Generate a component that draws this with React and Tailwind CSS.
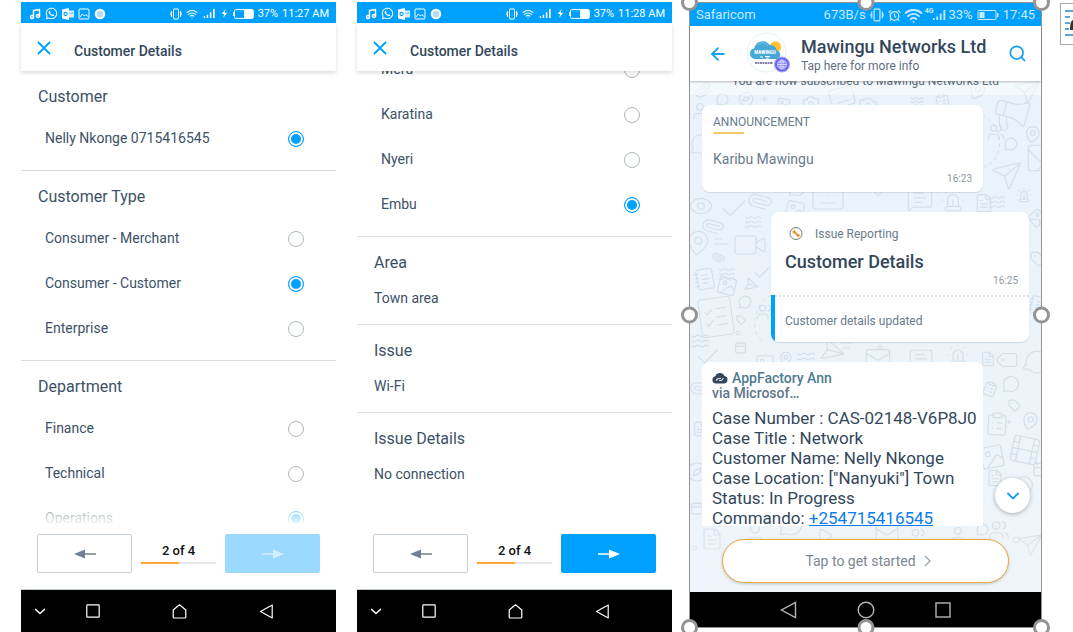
import React from "react";
import {
  Megaphone, MapPin, Camera, Send, Paperclip, Eye, Check, Image, Video, NotebookText, ClipboardList,
  MessageCircle, Calendar, Siren, FileText, Compass, Users, Play, Tag, Mail, Film, Search, ArrowLeft,
  ChevronDown, ChevronRight, AlarmClock, Wifi, Music, Keyboard, User, ListChecks, Waves, MessageSquareText,
} from "lucide-react";
import { FaWhatsapp } from "react-icons/fa";

const Vibrate = ({ className }) => (
  <svg className={className} viewBox="0 0 12 12" fill="none" stroke="currentColor">
    <rect x="3.5" y="1" width="5" height="10" rx="0.5" />
    <path d="M1.5 3v6M10.5 3v6" />
    <path d="M0.3 4.5v3M11.7 4.5v3" strokeWidth="0.6" />
  </svg>
);

const Bars = ({ className }) => (
  <svg className={className} viewBox="0 0 13 10" fill="currentColor">
    <path d="M0 8h1.6v2H0zM3.4 6.5H5V10H3.4zM6.8 3.5h1.8V10H6.8zM10.4 0h1.9v10h-1.9z" />
  </svg>
);

const Battery = ({ className, low }) => (
  <svg className={className} viewBox="0 0 21 10" fill="none" stroke="currentColor">
    {low ? (
      <>
        <rect x="0.5" y="0.5" width="18" height="9" rx="1" />
        <path d="M2 2h5v6H2z" fill="currentColor" stroke="none" />
        <path d="M20.2 3v4" strokeWidth="1.4" />
      </>
    ) : (
      <>
        <rect x="1.5" y="0.6" width="18.8" height="8.8" rx="1" />
        <path d="M11 1h9v8h-9z" fill="currentColor" stroke="none" />
        <path d="M0.7 3v4" strokeWidth="1.4" />
      </>
    )}
  </svg>
);

function StatusBar({ time }) {
  return (
    <div className="flex h-[21px] shrink-0 items-center justify-between bg-[#00a0ff] pt-[2px] pr-[7px] pl-2 text-[11px] leading-4 text-white">
      <div className="flex items-center gap-1">
        <Music className="size-[12px]" strokeWidth={3} />
        <FaWhatsapp className="size-[13px]" />
        <svg className="size-[12px]" viewBox="0 0 12 12">
          <path d="M0 1.5 7 0v12L0 10.5z" fill="#fff" />
          <path d="M7 2.5h5v7H7z" fill="#fff" fillOpacity=".85" />
          <circle cx="3.5" cy="6" r="1.6" fill="none" stroke="#00a0ff" strokeWidth="1.1" />
          <path d="M8 4.5l1.5 1.5L11.5 4" fill="none" stroke="#00a0ff" strokeWidth=".8" />
        </svg>
        <svg className="size-[12px]" viewBox="0 0 12 12" fill="none" stroke="#fff">
          <rect x="1" y="1" width="10" height="10" rx="1" />
          <path d="M2 9l2.5-3 2 2 1.5-1.5L10.500 9" />
        </svg>
        <svg className="size-[12px]" viewBox="0 0 12 12">
          <circle cx="6" cy="6" r="5.3" fill="#fff" />
          <circle cx="6" cy="6" r="2.9" fill="#b9defa" stroke="#9fd6fb" strokeWidth=".6" />
        </svg>
      </div>
      <div className="flex items-center gap-1">
        <Vibrate className="size-3" />
        <Wifi className="size-3" strokeWidth={2.2} />
        <Bars className="ml-px h-[9px] w-[13px]" />
        <svg className="h-[9px] w-[9px]" viewBox="1 0 9 9" fill="#fff">
          <path d="M6.500 0 2.800 5h2.400L4.200 9 8.200 3.800H5.800z" />
        </svg>
        <Battery className="h-[10px] w-[21px]" />
        <span>37%</span>
        <span>{time}</span>
      </div>
    </div>
  );
}

function Header() {
  return (
    <header className="relative z-10 flex h-12 shrink-0 items-center gap-[22px] bg-white pl-[15px] shadow-[0_2px_4px_rgba(0,0,0,0.14)]">
      <button aria-label="Close" className="pt-px text-[#00a0ff]">
        <svg className="block size-4" viewBox="0 0 16 16" fill="none" stroke="currentColor" strokeWidth="1.8">
          <path d="M2 2l12 12M14 2 2 14" />
        </svg>
      </button>
      <h1 className="pt-[7px] text-[14px] leading-5 font-medium text-[#33475b]">Customer Details</h1>
    </header>
  );
}

function Option({ name, label, checked }) {
  return (
    <label className="flex h-[45px] items-center justify-between pr-8 pl-6 text-[14px] leading-5">
      <span>{label}</span>
      <input
        type="radio"
        name={name}
        defaultChecked={checked}
        className="mt-[2px] size-4 appearance-none rounded-full border border-[#aeb6bf] bg-white checked:border-[#00a0ff] checked:bg-[#00a0ff] checked:shadow-[inset_0_0_0_2px_#fff]"
      />
    </label>
  );
}

function Group({ title, name, options, last }) {
  return (
    <fieldset className={last ? "" : "border-b border-[#d9dcdf] pb-[10px]"}>
      {title && <div className="pt-4 pb-2 pl-[17px] text-[16px] leading-5">{title}</div>}
      {options.map(([label, checked]) => (
        <Option key={label} name={name} label={label} checked={checked} />
      ))}
    </fieldset>
  );
}

function Field({ title, value, last }) {
  return (
    <section className={last ? "py-4 pl-[17px]" : "border-b border-[#d9dcdf] py-4 pl-[17px]"}>
      <h2 className="text-[16px] leading-5">{title}</h2>
      <p className="mt-[15px] text-[14px] leading-5">{value}</p>
    </section>
  );
}

const Arrow = ({ back }) => (
  <svg className="h-[10px] w-[22px]" viewBox="0 0 22 10" fill="currentColor">
    {back ? <path d="M0 5 11 .5v3.700h11v1.600H11v3.700z" /> : <path d="M22 5 11 .5v3.700H0v1.600h11v3.700z" />}
  </svg>
);

function FormPhone({ time, busy, children }) {
  return (
    <section className="flex min-w-0 flex-[315_1_0%] flex-col bg-white text-[#3d5166]">
      <StatusBar time={time} />
      <Header />
      <div className="relative flex-1 overflow-hidden">
        {children}
        {busy && <div className="absolute inset-x-0 bottom-0 h-6 bg-linear-to-b from-white/30 to-white" />}
      </div>
      <footer className="grid h-16 shrink-0 grid-cols-[95fr_75fr_95fr] items-start gap-[9px] border-b border-[#c3d0ca] px-4 pt-2">
        <button aria-label="Previous" className="flex h-[39px] items-center justify-center rounded-[2px] border border-[#c7cfd7] text-[#6f8193]">
          <Arrow back />
        </button>
        <div className="pt-[7px] text-center text-[13px] leading-5 font-medium text-[#111]">
          2 of 4
          <div className="mt-px h-[2px] bg-[#e7e9f0]">
            <div className="h-full w-1/2 bg-[#ffa733]" />
          </div>
        </div>
        <button
          aria-label="Next"
          className={
            busy
              ? "flex h-[39px] items-center justify-center rounded-[2px] bg-[#9bd9fe] text-[#d3eefe]"
              : "flex h-[39px] items-center justify-center rounded-[2px] bg-[#00a0ff] text-white"
          }
        >
          <Arrow />
        </button>
      </footer>
      <nav className="flex h-[42px] shrink-0 items-center bg-black pr-[62px] pl-[13px] text-white">
        <button aria-label="Hide">
          <svg className="block size-3" viewBox="0 0 12 12" fill="none" stroke="currentColor" strokeWidth="1.5"><path d="M1 4l5 4.500L11 4" /></svg>
        </button>
        <div className="ml-10 flex flex-1 items-center justify-between">
          <button aria-label="Recent apps">
            <svg className="block size-[14px]" viewBox="0 0 14 14" fill="none" stroke="currentColor" strokeWidth="1.2"><rect x=".8" y=".8" width="12.4" height="12.4" rx=".6" /></svg>
          </button>
          <button aria-label="Home">
            <svg className="block size-[15px]" viewBox="0 0 15 15" fill="none" stroke="currentColor" strokeWidth="1.2" strokeLinejoin="round"><path d="M1.200 6 7.500.8 13.800 6v7a1 1 0 0 1-1 1H2.200a1 1 0 0 1-1-1z" /></svg>
          </button>
          <button aria-label="Back">
            <svg className="block size-[15px]" viewBox="0 0 15 15" fill="none" stroke="currentColor" strokeWidth="1.2" strokeLinejoin="round"><path d="M13.200 1v13L1.500 7.500z" /></svg>
          </button>
        </div>
      </nav>
    </section>
  );
}

/* [icon, x, y, size, rotation] */
const doodles = [
  [MessageCircle, 26, 12, 13, 0], [Compass, 48, 10, 16, 20], [Image, 86, 16, 15, 10], [Camera, 112, 13, 18, -5],
  [Keyboard, 138, 2, 28, -15], [Camera, 168, 14, 20, 8], [Waves, 220, 14, 14, 0], [ClipboardList, 244, 12, 17, -12],
  [User, 0, 20, 20, 0], [Paperclip, 4, 0, 18, 10], [MapPin, 277, 0, 20, 30], [Send, 322, -4, 28, 10],
  [Megaphone, 300, 12, 42, 15], [MapPin, 333, 44, 19, 10], [Users, 297, 42, 18, 0], [MessageCircle, 314, 56, 14, 0],
  [Send, 300, 78, 32, 5], [Image, 334, 60, 34, 90], [Waves, 298, 112, 18, 0], [Siren, 326, 106, 16, 0],
  [MessageCircle, 0, 52, 22, 0], [Eye, -2, 112, 26, 0], [Check, 28, 112, 32, 0], [Paperclip, 58, 108, 24, 60],
  [Image, 94, 118, 22, 12], [MessageCircle, 98, 98, 18, 0], [Keyboard, 120, 98, 36, 0], [MapPin, 178, 96, 20, 0],
  [MessageSquareText, 216, 104, 28, 0], [Siren, 250, 106, 26, 0], [FileText, 284, 112, 20, 0],
  [Paperclip, 12, 134, 22, 60], [MapPin, -6, 148, 28, 8], [Video, 42, 146, 36, 0], [Waves, 54, 132, 18, 0],
  [Paperclip, 22, 170, 13, 70], [NotebookText, 3, 186, 24, -10], [Waves, 28, 184, 18, 0], [Check, 62, 182, 20, 0],
  [Image, 26, 194, 22, 14], [Send, 52, 196, 15, 60], [MessageCircle, 48, 214, 14, 0], [ListChecks, 12, 222, 28, -8],
  [Tag, 46, 234, 10, 0], [Users, 66, 222, 18, 0], [Calendar, 44, 260, 13, 0], [Check, 4, 262, 28, 0],
  [Waves, 0, 250, 20, 0], [Image, 64, 272, 22, 0], [MapPin, 88, 270, 15, 20], [Waves, 106, 268, 20, 0],
  [Send, 126, 256, 26, 60], [Mail, 174, 264, 28, 0], [MessageSquareText, 218, 266, 26, 0], [Siren, 256, 262, 24, 0],
  [FileText, 290, 270, 16, 0], [Tag, 308, 268, 22, -45], [MessageCircle, 334, 268, 26, 20],
  [Image, 338, 128, 18, 50], [Tag, 340, 170, 16, 0], [NotebookText, 338, 214, 20, 10],
  [Paperclip, 0, 296, 22, 50], [FileText, 2, 340, 16, 0], [Compass, -4, 380, 22, 0], [Calendar, 0, 420, 14, 0],
  [ClipboardList, 292, 300, 16, 20], [MessageCircle, 312, 294, 18, 0], [Tag, 318, 318, 13, 0],
  [ClipboardList, 294, 330, 26, 3], [MapPin, 330, 330, 20, 20], [Film, 318, 352, 34, 12], [Image, 288, 362, 28, -12],
  [FileText, 296, 388, 18, 0], [Calendar, 342, 380, 16, 0], [MessageCircle, 324, 394, 20, 0],
  [FileText, 10, 446, 24, 0], [User, 52, 440, 26, 0], [MessageCircle, 88, 430, 26, 0], [Play, 126, 446, 18, 0],
  [Mail, 184, 440, 26, 0], [Users, 218, 446, 20, 0], [User, 258, 444, 20, 0], [MessageCircle, 286, 442, 13, 0],
  [Users, 298, 438, 22, 0], [Send, 326, 450, 26, 10],
];

function Wallpaper() {
  return (
    <svg aria-hidden="true" className="absolute inset-x-0 top-0 h-full w-full text-[#d3e0e9]">
      {doodles.map(([Icon, x, y, size, turn], i) => (
        <g key={i} transform={`rotate(${turn} ${x + size / 2} ${y + size / 2})`}>
          <Icon x={x} y={y} size={size} strokeWidth={1.2} absoluteStrokeWidth />
        </g>
      ))}
      <g fill="none" stroke="currentColor">
        <rect x="10" y="217" width="32" height="38" rx="3" transform="rotate(-8 26 236)" />
        <circle cx="187" cy="25" r="2" /><circle cx="48" cy="252" r="2" /><circle cx="190" cy="266" r="2" />
        <circle cx="326" cy="459" r="3" /><circle cx="5" cy="467" r="2" />
        <path d="M72 18h5M74.500 15.500v5M317 341h4M319 339v4M24 158h8M24 163h14M150 262h12M152 267h8" />
        <path d="M292 34c22 10 24 44 2 52M81 214c-18 10-22 38-8 46" strokeDasharray="4 3" />
      </g>
    </svg>
  );
}

function Logo() {
  return (
    <svg className="size-[44px]" viewBox="0 0 44 44">
      <circle cx="20.5" cy="20.5" r="19.5" fill="#fff" stroke="#e4f2f8" />
      <circle cx="29.500" cy="15" r="5.500" fill="#ffc12e" stroke="#fbd469" />
      <path d="M9 27a5.500 5.500 0 0 1-.8-10.800A8.500 8.500 0 0 1 23.500 13a7 7 0 0 1 7.500 5.500 4.500 4.500 0 0 1 .5 8.500z" fill="#45a9d8" />
      <path d="M10 13.500c4-4 9-3 12 .5" fill="none" stroke="#7cc8e8" />
      <text x="19" y="22" textAnchor="middle" fontSize="4.5" fontWeight="900" fill="#fff" fontFamily="Roboto, sans-serif">MAWINGU</text>
      <path d="M14 25h3M19 24.500h5M20 26h3" stroke="#fff" strokeWidth="1.2" />
      <path d="M9 31h18" stroke="#5b5a96" strokeWidth="1.5" strokeDasharray="2 .5" />
      <circle cx="36" cy="32.500" r="7.500" fill="#6b67f2" stroke="#a3a5f7" />
      <g fill="none" stroke="#dcdcff" strokeWidth=".9">
        <circle cx="36" cy="32.500" r="4.500" />
        <ellipse cx="36" cy="32.500" rx="2" ry="4.500" />
        <path d="M31.500 32.500h9M36 28v9M32.300 30.200h7.400M32.300 34.800h7.400" />
      </g>
    </svg>
  );
}

const handle = "absolute z-20 size-[17px] rounded-full border-[3px] border-[#949494] bg-white";

function ChatPhone() {
  return (
    <section className="relative mb-1 ml-[17px] flex min-w-0 flex-[351_1_0%] flex-col border border-[#949494] text-[#33475b]">
      <div className="flex h-[23px] shrink-0 items-center bg-[#00a0ff] px-[6px] pt-px text-[13px] leading-5 text-[#c9eaff]">
        <span className="flex-1">Safaricom</span>
        <span>673B/s</span>
        <Vibrate className="ml-1 size-[14px]" />
        <AlarmClock className="ml-1 size-[13px]" strokeWidth={2.4} />
        <Wifi className="ml-[3px] size-[19px]" strokeWidth={2.4} />
        <span className="mb-2 ml-[2px] text-[7px] leading-2 font-bold">4G</span>
        <Bars className="h-[12px] w-[13px]" />
        <span className="ml-[2px]">33%</span>
        <Battery low className="ml-1 h-[10px] w-[22px]" />
        <span className="ml-1">17:45</span>
      </div>
      <header className="relative z-10 flex h-[55px] shrink-0 items-center bg-white pr-[14px] pl-[18px] shadow-[0_1px_2px_rgba(0,0,0,0.25)]">
        <button aria-label="Back" className="text-[#18a0f5]">
          <ArrowLeft className="size-[20px]" strokeWidth={2.2} />
        </button>
        <div className="ml-[18px]"><Logo /></div>
        <div className="ml-[11px] min-w-0 flex-1 pt-[2px]">
          <h1 className="text-[18px] leading-[22px] font-medium whitespace-nowrap">Mawingu Networks Ltd</h1>
          <p className="text-[12px] leading-4 text-[#5f7080]">Tap here for more info</p>
        </div>
        <button aria-label="Search" className="text-[#18a0f5]">
          <Search className="size-[19px]" strokeWidth={2.2} />
        </button>
      </header>
      <div className="relative flex flex-1 flex-col overflow-hidden bg-linear-to-b from-[#e9f3f9] to-[#eef4fa]">
        <Wallpaper />
        <div className="relative flex-1 overflow-hidden">
          <div className="h-[14px] overflow-hidden bg-white/50 text-center text-[12px] leading-4 text-[#5f7080]">
            <p className="-mt-2">You are now subscribed to Mawingu Networks Ltd</p>
          </div>
          <article className="mt-[10px] ml-3 h-[87px] w-[281px] rounded-lg bg-white px-[11px] pt-[9px] shadow-[0_1px_1px_rgba(120,140,160,0.25)]">
            <h2 className="text-[12px] leading-4 text-[#6a7a8a]">ANNOUNCEMENT</h2>
            <div className="mt-[2px] h-[2px] w-[31px] bg-[#efcb6c]" />
            <p className="mt-[15px] text-[14px] leading-5 text-[#6a7a8a]">Karibu Mawingu</p>
            <time className="block text-right text-[10px] leading-5 text-[#8c98a3]">16:23</time>
          </article>
          <article className="mt-5 mr-3 ml-auto h-[130px] w-[258px] overflow-hidden rounded-lg bg-white shadow-[0_1px_1px_rgba(120,140,160,0.25)]">
            <div className="h-[83px] pt-[14px] pr-[11px] pl-[14px]">
              <div className="flex items-center gap-3 pl-1 text-[12px] leading-4 text-[#6a7a8a]">
                <svg className="size-[14px]" viewBox="0 0 14 14" fill="none">
                  <circle cx="7" cy="6.500" r="6" fill="#fffdf5" stroke="#737b78" />
                  <path d="M5 4.500l4.500 4.500" stroke="#e8912c" strokeWidth="1.8" />
                  <path d="M3.500 4.800l1.700.2.2-1.900M8.800 10l.4-1.500 1.700-.3" stroke="#d37b27" strokeWidth="1.2" />
                </svg>
                Issue Reporting
              </div>
              <h2 className="mt-[10px] text-[18px] leading-5 font-medium">Customer Details</h2>
              <time className="block pt-[3px] text-right text-[10px] leading-3 text-[#8c98a3]">16:25</time>
            </div>
            <div className="h-[47px] border-l-4 border-[#00a0ff]">
              <div className="border-t-2 border-dotted border-[#dfe3e7] pt-[14px] pl-[10px] text-[12px] leading-5 text-[#6a7a8a]">
                Customer details updated
              </div>
            </div>
          </article>
          <article className="mt-5 ml-3 w-[281px] rounded-t-lg bg-white px-[10px] pt-2 pb-4">
            <div className="flex items-center gap-1 text-[14px] leading-4 font-medium text-[#4d7c90]">
              <svg className="h-[12px] w-[16px]" viewBox="0 0 16 12">
                <path d="M4 11.500a3.700 3.700 0 0 1-.7-7.300A5 5 0 0 1 12.500 4 3.800 3.800 0 0 1 12 11.500z" fill="#33475b" />
                <path d="M4 8.500l2-2h3M11.500 6l-2 2.500H7" fill="none" stroke="#d9e2ea" strokeWidth="1.2" />
              </svg>
              AppFactory Ann
            </div>
            <p className="text-[14px] leading-[14px] font-medium text-[#62768a]">via Microsof…</p>
            <div className="mt-2 text-[17px] leading-[20px] whitespace-nowrap">
              <p>Case Number : CAS-02148-V6P8J0</p>
              <p>Case Title : Network</p>
              <p>Customer Name: Nelly Nkonge</p>
              <p>Case Location: ["Nanyuki"] Town</p>
              <p>Status: In Progress</p>
              <p>Commando: <a href="tel:+254715416545" className="text-[#0b7bf0] underline">+254715416545</a></p>
            </div>
          </article>
          <button aria-label="Scroll to latest" className="absolute right-[11px] bottom-[13px] flex size-[35px] items-center justify-center rounded-full bg-white text-[#18a0f5] shadow-[0_1px_4px_rgba(0,0,0,0.3)]">
            <ChevronDown className="size-5" strokeWidth={2.2} />
          </button>
        </div>
        <div className="relative h-[66px] shrink-0 bg-linear-to-b from-transparent to-[#eef4fa] px-8 pt-[13px]">
          <button className="flex h-[44px] w-full items-center justify-center gap-1 rounded-full border border-[#e9a93c] bg-white pl-2 text-[14px] text-[#7c8791] shadow-[0_1px_3px_rgba(0,0,0,0.2)]">
            Tap to get started
            <svg className="h-3 w-[14px]" viewBox="0 0 14 12" fill="none" stroke="#9aa2aa" strokeWidth="1.3"><path d="M5 1l5 5-5 5" /></svg>
          </button>
        </div>
      </div>
      <nav className="flex h-[35px] shrink-0 items-center justify-between bg-black px-[90px] text-[#b5b5b5]">
        <button aria-label="Back">
          <svg className="block h-[18px] w-[17px]" viewBox="0 0 17 18" fill="none" stroke="currentColor" strokeWidth="1.4"><path d="M15.500 1.500v15L1.500 9z" /></svg>
        </button>
        <button aria-label="Home">
          <svg className="block size-[18px]" viewBox="0 0 18 18" fill="none" stroke="currentColor" strokeWidth="1.4"><circle cx="9" cy="9" r="7.800" /></svg>
        </button>
        <button aria-label="Recent apps">
          <svg className="block size-[16px]" viewBox="0 0 16 16" fill="none" stroke="currentColor" strokeWidth="1.4"><rect x="1" y="1" width="14" height="14" /></svg>
        </button>
      </nav>
      <i className={`${handle} -top-[9px] -left-[9px]`} />
      <i className={`${handle} -top-[9px] left-1/2 -translate-x-1/2`} />
      <i className={`${handle} -top-[9px] -right-[9px]`} />
      <i className={`${handle} top-1/2 -left-[9px] -translate-y-1/2`} />
      <i className={`${handle} top-1/2 -right-[9px] -translate-y-1/2`} />
      <i className={`${handle} -bottom-[9px] -left-[9px]`} />
      <i className={`${handle} -bottom-[9px] left-1/2 -translate-x-1/2`} />
      <i className={`${handle} -right-[9px] -bottom-[9px]`} />
    </section>
  );
}

export default function App() {
  return (
    <main className="flex h-screen overflow-hidden bg-white pt-[2px] pl-[21px] font-[Roboto,sans-serif]">
      <FormPhone time="11:27 AM" busy>
        <Group title="Customer" name="customer" options={[["Nelly Nkonge 0715416545", true]]} />
        <Group
          title="Customer Type"
          name="type"
          options={[["Consumer - Merchant"], ["Consumer - Customer", true], ["Enterprise"]]}
        />
        <Group title="Department" name="department" last options={[["Finance"], ["Technical"], ["Operations", true]]} />
      </FormPhone>
      <div className="w-[21px] shrink-0" />
      <FormPhone time="11:28 AM">
        <div className="-mt-[25px]">
          <Group name="town" options={[["Meru"], ["Karatina"], ["Nyeri"], ["Embu", true]]} />
          <Field title="Area" value="Town area" />
          <Field title="Issue" value="Wi-Fi" />
          <Field title="Issue Details" value="No connection" last />
        </div>
      </FormPhone>
      <ChatPhone />
      <button aria-label="Layout options" className="mt-px ml-[18px] h-[42px] w-[13px] shrink-0 overflow-hidden border border-r-0 border-[#ababab] bg-white">
        <svg className="block h-10 w-3" viewBox="0 0 12 40" fill="none" stroke="#2e86c1" strokeWidth="1.5">
          <path d="M4 7h8M4 13h5M4 19h5M4 25h4M4 31h8" />
          <path d="M12 16c-2.500 1-3 5-3 10h3z" fill="#333" stroke="none" />
        </svg>
      </button>
    </main>
  );
}
